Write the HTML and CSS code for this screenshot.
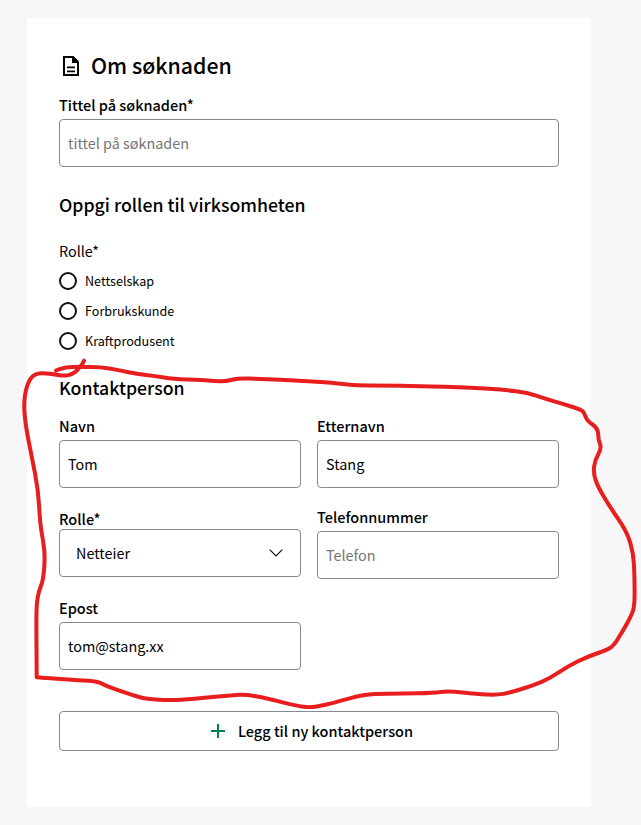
FILE: index.html
```
<!DOCTYPE html>
<html lang="no">
<head>
    <meta charset="UTF-8">
    <meta name="viewport" content="width=device-width, initial-scale=1.0">
    <title>Om søknaden</title>
    <link rel="stylesheet" href="styles.css">
</head>
<body>
    <form class="card">
        <h1 class="card-title">
            <svg class="doc-icon" viewBox="0 0 24 24" width="24" height="24">
                <path d="M5 3h9L19 8v13H5z" fill="none" stroke="#000" stroke-width="2"/>
                <path d="M13 3h1.5L19 7.5V9h-6z" fill="#000"/>
                <path d="M8 13.4h8M8 17.4h8" stroke="#000" stroke-width="1.8"/>
            </svg>
            <span>Om søknaden</span>
        </h1>

        <div class="field">
            <label for="title">Tittel på søknaden*</label>
            <input id="title" type="text" placeholder="tittel på søknaden">
        </div>

        <h2 class="section-title">Oppgi rollen til virksomheten</h2>
        <div class="legend">Rolle*</div>
        <div class="radios">
            <label class="radio"><input type="radio" name="role"><span>Nettselskap</span></label>
            <label class="radio"><input type="radio" name="role"><span>Forbrukskunde</span></label>
            <label class="radio"><input type="radio" name="role"><span>Kraftprodusent</span></label>
        </div>

        <h2 class="section-title contact-title">Kontaktperson</h2>
        <div class="contact-grid">
            <div class="field">
                <label for="firstname">Navn</label>
                <input id="firstname" type="text" value="Tom">
            </div>
            <div class="field">
                <label for="lastname">Etternavn</label>
                <input id="lastname" type="text" value="Stang">
            </div>
            <div class="field field-select">
                <label>Rolle*</label>
                <button class="select" type="button">
                    <span>Netteier</span>
                    <svg viewBox="0 0 14 8" width="14" height="8">
                        <path d="M.7.7 7 7 13.3.7" fill="none" stroke="#111" stroke-width="1.2"/>
                    </svg>
                </button>
            </div>
            <div class="field">
                <label for="phone">Telefonnummer</label>
                <input id="phone" type="text" placeholder="Telefon">
            </div>
            <div class="field">
                <label for="email">Epost</label>
                <input id="email" type="text" value="tom@stang.xx">
            </div>
        </div>

        <button class="add-btn" type="button">
            <svg viewBox="0 0 14 14" width="14" height="14">
                <path d="M7 0v14M0 7h14" stroke="#00824d" stroke-width="2"/>
            </svg>
            <span>Legg til ny kontaktperson</span>
        </button>
    </form>

    <svg class="marker" viewBox="0 0 641 825" width="641" height="825">
        <path id="marker-line"/>
    </svg>

    <script>
        // punkter langs den røde tusjstreken
        const points = [
            [56,370.5], [64,367], [82,367], [101,367], [118,370], [137,374], [155,376], [173,379],
            [203,380], [214,381], [226,381.5], [238,378], [260,379], [300,380.7], [333,382.7],
            [353,385.3], [385,385.6], [417,386], [473,387.7], [505,390], [527,392.3], [547,399.3],
            [565,404.5], [582,410], [584.5,413.7], [587,420.7], [598,428.3], [598.3,440],
            [601.7,448], [595,460], [593.2,473], [598,487], [610,507], [627,531.7], [633.3,553],
            [634.5,575], [634.7,605], [631.7,615], [621.7,633], [613.3,646], [606.7,650],
            [586.7,657], [568.3,666], [550,678.3], [533.3,685.3], [510,692.7], [496.7,695],
            [476.7,694], [448.3,691], [433,693], [403,693.7], [373,693.7], [356.7,696.3],
            [333,703], [320,706], [310,707.5], [296.7,706], [266.7,698.3], [245,694.3],
            [226.7,695.7], [193.3,699], [170,700.3], [146.7,699], [135,696], [106.7,686.3],
            [97.3,681.3], [80,680.3], [48.3,678], [36.7,677.3], [36.7,677.3], [36.3,620],
            [36.7,603], [38.7,591.7], [43.3,580], [45,556.7], [43.3,541.7], [40,523],
            [38.3,490], [31.7,456.7], [25.5,425], [23.7,403], [26.7,385], [34,373],
            [50,373.3], [63,376.2], [74,374], [81.7,365], [84,360.7]
        ];

        // myk kurve gjennom midtpunktene
        let d = `M${points[0]}`;
        for (let i = 1; i < points.length - 1; i++) {
            const [x, y] = points[i];
            const next = points[i + 1];
            d += ` Q${x},${y} ${(x + next[0]) / 2},${(y + next[1]) / 2}`;
        }
        d += ` L${points[points.length - 1]}`;
        document.getElementById('marker-line').setAttribute('d', d);
    </script>
</body>
</html>
```
FILE: styles.css
```
* {
    box-sizing: border-box;
}

body {
    margin: 0;
    padding: 18px 50px 18px 27px;
    background-color: #f7f7f7;
    color: #000;
    font-family: "Noto Sans CJK JP", "Noto Sans", sans-serif;
    font-size: 14.4px;
}

.card {
    height: 789px;
    padding: 31px 32px;
    background-color: #fff;
}

.card-title {
    display: flex;
    align-items: center;
    gap: 8px;
    height: 34px;
    margin: 0 0 8px;
    font-size: 21.3px;
    font-weight: 500;
    line-height: 34px;
}

.card-title span {
    padding-bottom: 2px;
}

.field {
    display: flex;
    flex-direction: column;
}

.field label {
    font-size: 14.5px;
    font-weight: 500;
    line-height: 28px;
}

.field input,
.select {
    width: 100%;
    height: 48px;
    padding: 0 8px 2px;
    border: 1px solid #868993;
    border-radius: 4px;
    background-color: #fff;
    color: #000;
    font: inherit;
}

.field input::placeholder {
    color: #757575;
}

.section-title {
    margin: 23px 0 0;
    font-size: 17.7px;
    font-weight: 500;
    line-height: 28px;
}

.legend {
    margin-top: 21px;
    line-height: 24px;
}

.radios {
    margin-top: 3px;
}

.radio {
    display: flex;
    align-items: center;
    gap: 8px;
    height: 30px;
    font-size: 12.6px;
}

.radio input {
    width: 18px;
    height: 18px;
    margin: 0;
    appearance: none;
    border: 2px solid #111;
    border-radius: 50%;
}

.radio span {
    padding-bottom: 2px;
}

.contact-title {
    margin-top: 17px;
}

.contact-grid {
    display: grid;
    grid-template-columns: 1fr 1fr;
    gap: 15px 16px;
    margin-top: 11px;
}

.field-select label {
    padding-top: 6px;
    line-height: 20px;
}

.select {
    display: flex;
    align-items: center;
    justify-content: space-between;
    padding: 0 17px 0 16px;
}

.select span {
    padding-bottom: 2px;
}

.add-btn {
    display: flex;
    align-items: center;
    justify-content: center;
    gap: 13px;
    width: 100%;
    height: 40px;
    margin-top: 41px;
    padding: 0 0 0 6px;
    border: 1px solid #868993;
    border-radius: 4px;
    background-color: #fff;
    color: #000;
    font: inherit;
    font-size: 14.5px;
    font-weight: 500;
}

.add-btn span {
    padding-bottom: 2px;
}

/* tusjstrek over skjemaet */
.marker {
    position: absolute;
    top: 0;
    left: 0;
    pointer-events: none;
}

.marker path {
    fill: none;
    stroke: #e81e1e;
    stroke-width: 4;
    stroke-linecap: round;
    stroke-linejoin: round;
}
```
